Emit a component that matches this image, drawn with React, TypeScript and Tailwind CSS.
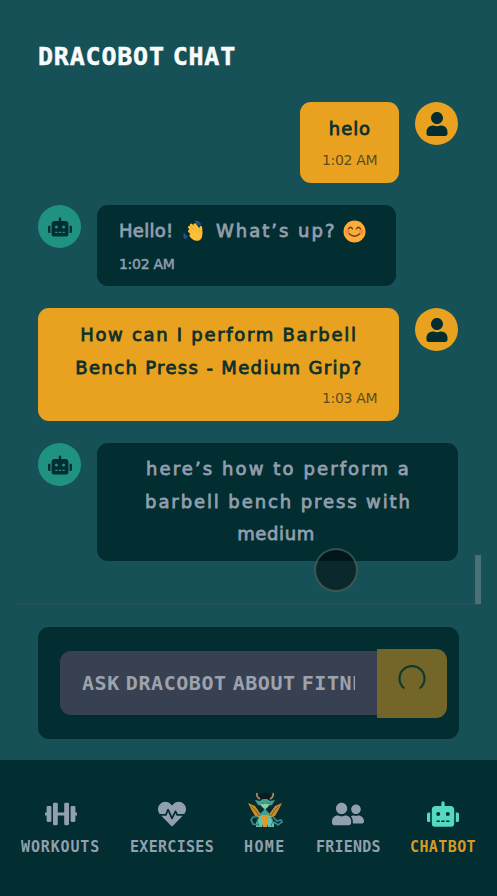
import type { ReactNode } from "react";
import { FaDumbbell, FaHeartbeat, FaRobot, FaUser, FaUserFriends } from "react-icons/fa";

const body =
  "whitespace-nowrap font-['DejaVu_Sans',sans-serif] text-[18px] leading-[32.5px] [-webkit-text-stroke:0.8px_currentColor]";

function Avatar({ user }: { user?: boolean }) {
  return (
    <div
      className={`flex size-[43px] shrink-0 items-center justify-center rounded-full text-[#022d31] ${user ? "bg-[#e9a21f]" : "bg-[#209282]"}`}
    >
      {user ? <FaUser size={24} /> : <FaRobot size={24} />}
    </div>
  );
}

function Time({ children, className }: { children: ReactNode; className: string }) {
  return (
    <div
      className={`font-['DejaVu_Sans',sans-serif] text-[14px] leading-[22px] tracking-[-0.3px] ${className}`}
    >
      {children}
    </div>
  );
}

function Wave() {
  return (
    <svg className="h-[22px] w-[24px]" viewBox="0 0 24 24" fill="none">
      <path d="M15 3Q18 3 18 6M14 1.5Q20 1 20 6M2 14Q3 18 6 18M2 17Q2 20 5 20" stroke="#225f96" strokeWidth="1.4" />
      <g stroke="#fdbf35" strokeWidth="3" strokeLinecap="round">
        <path d="M8 8l8 8M10 5.500l8 8M14 5l6 8M8 12l6 6M20.500 8l.4 7" />
      </g>
      <path d="M10 12l7-4 4 5c2 4 1 8-3 9.500-4 1-7-1-10-5z" fill="#fdbf35" />
      <path d="M10 8l3 3M12 6l3 3M9 11l3 3M20 10q-3 1-2 5" stroke="#e9a32b" strokeWidth=".6" />
    </svg>
  );
}

function Smile() {
  return (
    <svg className="h-[23px] w-[23px]" viewBox="0 0 23 23" fill="none">
      <circle cx="11.500" cy="11.500" r="11" fill="#fbad37" />
      <circle cx="4.800" cy="12" r="2.400" fill="#f98a3c" />
      <circle cx="18.200" cy="12" r="2.400" fill="#f98a3c" />
      <path d="M5.500 8.800q2-3 4 0M13.500 8.800q2-3 4 0M6.500 14q5 4.500 10 0" stroke="#663c1c" strokeWidth="1.500" strokeLinecap="round" />
    </svg>
  );
}

function Dragon() {
  return (
    <svg className="h-[36px] w-[36px]" viewBox="0 0 36 36">
      <path d="M1 11l7 3 5 7 2 6-7-3-4-7zM35 11l-7 3-5 7-2 6 7-3 4-7z" fill="#cb8c28" />
      <path d="M4 14l5 5 4 6M32 14l-5 5-4 6" stroke="#805421" fill="none" />
      <path d="M12 3q6-5 12 0l-2 4h-8z" fill="#0d1b20" />
      <path d="M10 1q-1 4 3 6M26 1q1 4-3 6" stroke="#b9826a" strokeWidth="1.700" fill="none" />
      <path d="M8 8l5 1 3-2h4l3 2 5-1-3 5-5 1-1 4 4 4v5h-10v-5l4-4-1-4-5-1z" fill="#459d90" />
      <path d="M13 11l3 1h4l3-1-2 4-3 2-3-2z" fill="#8ccba5" />
      <path d="M14 11h3v1h-3zM20 11h3v1h-3z" fill="#a6553b" />
      <path d="M12 24h12l3 7v4h-6l-2-6h-2l-2 6H9v-4z" fill="#64c3ae" />
      <path d="M14 23h8l-1 4-1 8h-4l-1-8z" fill="#e09a29" />
      <path d="M12 25l-2 4 2 5M24 25l2 4-2 5" stroke="#237d7b" fill="none" />
      <path d="M10 25H6l-2 3 2 4 5 1M26 25l4 4 4-1 1 2-4 3-4-3" stroke="#3b8989" strokeWidth="1.700" fill="none" />
    </svg>
  );
}

function Tab({ icon, label, className }: { icon: ReactNode; label: string; className: string }) {
  return (
    <a className={`flex flex-col items-center ${className}`}>
      <span className="flex h-[36px] items-center">{icon}</span>
      <span className="mt-[9px] self-start font-['DejaVu_Sans_Mono',monospace] text-[15px] leading-[20px] font-bold whitespace-nowrap">
        {label}
      </span>
    </a>
  );
}

export default function App() {
  return (
    <div className="relative flex h-[896px] w-[497px] flex-col overflow-hidden bg-[#165158]">
      <main className="mx-[17px] flex h-[605px] shrink-0 flex-col border-b-2 border-[#28505b] px-[21px]">
        <h1 className="mt-[39px] h-[36px] font-['DejaVu_Sans_Mono',monospace] text-[25px] leading-[36px] font-bold tracking-[0.8px] whitespace-nowrap text-[#f8fafc] [-webkit-text-stroke:0.5px_currentColor] [word-spacing:-8px]">
          DRACOBOT CHAT
        </h1>

        <div className="mt-[27px] mr-[0.6px] flex justify-end gap-4">
          <div className="h-[81px] w-[99px] rounded-[11px] bg-[#e9a21f] pt-[11px] text-[#0c302b]">
            <p className={`${body} text-center tracking-[0.9px]`}>helo</p>
            <Time className="mr-[22px] pt-[3px] text-right text-[#5b4d22]">1:02 AM</Time>
          </div>
          <Avatar user />
        </div>

        <div className="mt-[22px] flex gap-4">
          <Avatar />
          <div className="h-[81px] w-[299px] rounded-[11px] bg-[#022d31] pt-[10px] pl-[22px] text-[#919eac]">
            <p className={`${body} flex items-center`}>
              <span className="w-[62px] tracking-[0.3px]">Hello!</span>
              <Wave />
              <span className="ml-[11px] w-[127px] tracking-[2px]">What’s up?</span>
              <Smile />
            </p>
            <Time className="pt-[5px] text-[#919eac] [-webkit-text-stroke:0.5px_currentColor]">1:02 AM</Time>
          </div>
        </div>

        <div className="mt-[22px] mr-[0.6px] flex justify-end gap-4">
          <div className="h-[113px] w-[361px] rounded-[11px] bg-[#e9a21f] pt-[11px] text-center text-[#0c302b]">
            <p className={`${body} tracking-[1.700px]`}>How can I perform Barbell</p>
            <p className={`${body} tracking-[1.350px]`}>Bench Press - Medium Grip?</p>
            <Time className="mr-[22px] pt-[3px] text-right text-[#5b4d22]">1:03 AM</Time>
          </div>
          <Avatar user />
        </div>

        <div className="mt-[22px] flex gap-4">
          <Avatar />
          <div className="h-[118px] w-[361px] rounded-[11px] bg-[#022d31] pt-[10px] pl-[2px] text-center text-[#919eac]">
            <p className={`${body} tracking-[2.100px]`}>here’s how to perform a</p>
            <p className={`${body} tracking-[1.900px]`}>barbell bench press with</p>
            <p className={`${body} pr-[5px] tracking-[0.600px]`}>medium</p>
          </div>
        </div>
      </main>

      <div className="absolute top-[555px] left-[475px] h-[49px] w-[6px] bg-[#4b7176]" />
      <div className="absolute top-[548px] left-[314px] size-[44px] rounded-full border-2 border-[#6b8583]/50 bg-black/50" />

      <form className="mx-[38px] mt-[22px] flex h-[112px] shrink-0 items-center rounded-[11px] bg-[#022d31] pl-[22px]">
        <input
          className="h-[64px] w-[317px] rounded-l-[11px] bg-[#374152] px-[22px] font-['DejaVu_Sans_Mono',monospace] text-[20px] font-bold tracking-[0.550px] outline-none [word-spacing:-6.5px] placeholder:text-[#9da2ad]"
          placeholder="ASK DRACOBOT ABOUT FITNESS"
        />
        <button className="flex h-[69px] w-[70px] justify-center rounded-r-[11px] bg-[#736628] pt-[16px]" type="button">
          <svg className="h-[28px] w-[28px]" viewBox="0 0 28 28" fill="none">
            <path d="M5.600 22.800A12.500 12.500 0 1 1 22.400 22.800" stroke="#103b2c" strokeWidth="2.200" strokeLinecap="round" />
          </svg>
        </button>
      </form>

      <nav className="mt-[21px] flex h-[136px] shrink-0 gap-[30px] bg-[#022d31] pt-[32px] pl-[21px] text-[#929fae]">
        <Tab icon={<FaDumbbell size={32} className="mt-[8px]" />} label="WORKOUTS" className="w-[79px] tracking-[0.850px]" />
        <Tab icon={<FaHeartbeat size={28} className="mt-[8px]" />} label="EXERCISES" className="w-[84px] tracking-[0.300px]" />
        <Tab icon={<Dragon />} label="HOME" className="w-[42px] tracking-[1.400px]" />
        <Tab icon={<FaUserFriends size={32} className="mt-[8px]" />} label="FRIENDS" className="w-[64px] tracking-[0.200px]" />
        <Tab
          icon={<FaRobot size={32} className="mt-[8px] text-[#55d9c1]" />}
          label="CHATBOT"
          className="w-[66px] tracking-[0.400px] text-[#d69a27]"
        />
      </nav>
    </div>
  );
}
